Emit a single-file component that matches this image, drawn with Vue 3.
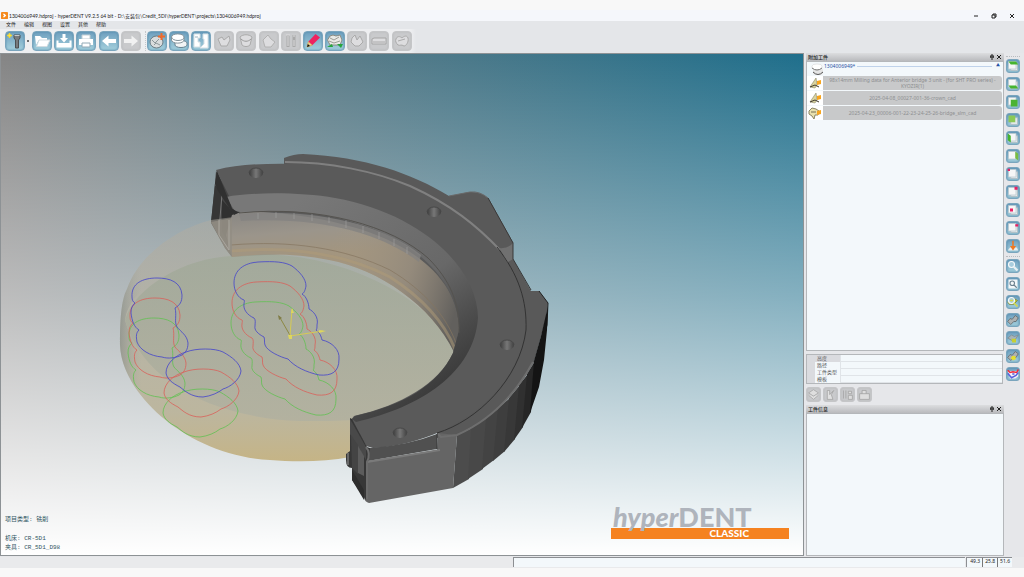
<script setup>
const menus = ['文件', '编辑', '视图', '设置', '其他', '帮助']

const W = '#ffffff'
const G = '#dddddf'
const tooth = 'M4 8C5 5 8 5 10 7C12 5 15 4 16 7C17 11 14 15 12 15C9 13 8 15 6 14C4 12 3 10 4 8Z'

const groups = [
  {
    name: 'start',
    items: [
      {
        label: '新建项目',
        drop: true,
        p: [
          { d: 'M9 4H15V7L13.500 9V17H10.500V9L9 7Z', f: '#777b7e', s: '#4c5052' },
          { d: 'M9.500 4.500H14.500', s: '#c8c8c8' },
          { d: 'M4.500 2L5.200 3.800L7 4.500L5.200 5.200L4.500 7L3.800 5.200L2 4.500L3.800 3.800Z', f: '#ffe94a', s: '#f2d633' }
        ]
      }
    ]
  },
  {
    name: 'file',
    items: [
      { label: '打开', p: [{ d: 'M3 5H8L10 7H15V9.500H6.500L4 14Z', f: W }, { d: 'M7 9H18L15 15.500H4.500Z', f: W, s: '#d3dde2' }] },
      { label: '保存', p: [{ d: 'M8.500 3H11.500V7H14L10 11.500L6 7H8.500Z', f: W }, { d: 'M3.500 9.500V15.500H16.500V9.500', s: W, w: 2 }, { d: 'M4 13.500H16', s: W, w: 3 }] },
      { label: '打印', p: [{ d: 'M6 4H14V8H6Z', f: W, s: '#c2ced4' }, { d: 'M3 8H17V14H3Z', f: W }, { d: 'M6 12H14V16H6Z', f: W, s: '#93aab6' }] }
    ]
  },
  {
    name: 'history',
    items: [
      { label: '后退', p: [{ d: 'M3 10L9.500 4.500V8H17V12H9.500V15.500Z', f: W }] },
      { label: '前进', off: true, p: [{ d: 'M17 10L10.500 4.500V8H3V12H10.500V15.500Z', f: '#f1f1f1' }] }
    ]
  },
  {
    name: 'blank',
    sep: true,
    items: [
      {
        label: '添加工件',
        p: [
          { d: 'M3 11A6.500 6 0 1 1 16 11A6.500 6 0 1 1 3 11Z', f: '#d9dcdd', s: '#6c7c84' },
          { d: 'M5 9L8 12L12 8M7 14L9 12L13 14', s: '#8d979a' },
          { d: 'M14.500 2V9M11 5.500H18', s: '#f0692a', w: 2 }
        ]
      },
      {
        label: '毛坯',
        p: [
          { d: 'M6 12A6 2.500 0 0 1 18 12V14A6 2.500 0 0 1 6 14Z', f: '#f2f4f5', s: '#688391' },
          { d: 'M2.500 6A6 3 0 0 1 15 6V9A6 3 0 0 1 2.500 9Z', f: W, s: '#84939b' },
          { d: 'M3 6.500A6 3 0 0 0 15 6.500', s: '#84939b' }
        ]
      },
      { label: '夹具', p: [{ d: 'M3 3H9V7H7V11H9V16H3ZM12 3H17V17H9L13 13V8H12Z', f: W, s: '#d6e0e5' }, { d: 'M4 6H7', s: '#9fb4bf' }] }
    ]
  },
  {
    name: 'scan',
    items: [
      { label: '定位', off: true, p: [{ d: 'M4 8L8 6L10 9L15 5L16 9L13 15H7Z', f: G, s: '#aaa' }] },
      { label: '颌弓', off: true, p: [{ d: 'M4 6C7 3 13 3 16 6L14 14C12 16 8 16 6 14Z', f: G, s: '#aaa' }, { d: 'M5 8C8 11 12 11 15 8', s: '#999' }] }
    ]
  },
  {
    name: 'edit',
    items: [
      { label: '支撑', off: true, p: [{ d: 'M4 9L9 4L12 8L16 11L12 16H6Z', f: G, s: '#b2b2b2' }] },
      { label: '刀具', off: true, p: [{ d: 'M7 4V16M13 4V16', s: '#a9a9a9', w: 3 }, { d: 'M5 4H9M7 5V15M12 5H14M13 9V15', s: G }] },
      {
        label: '标记',
        p: [
          { d: 'M4 16L5.500 10.500L9.500 14Z', f: '#f1cf84', s: '#cfae6c' },
          { d: 'M5.500 10.500L12.500 3L17 6.500L9.500 14Z', f: '#ef2360' },
          { d: 'M4 16L4.800 13L7 15Z', f: '#111' }
        ]
      },
      {
        label: '计算',
        p: [
          { d: 'M5 5L8 4L11 5L15 4L17 9L15 14H5L2.500 9Z', f: '#e9e9e5', s: '#8c8c83' },
          { d: 'M5 7L9 9L14 6M4 10L9 12L15 10', s: '#9d9d96' },
          { d: 'M2 16L7 13L8 16ZM12 13L18 13L16 17Z', f: '#25a53c' }
        ]
      },
      { label: '碰撞', off: true, p: [{ d: 'M5 7L8 4L10 9L13 5L16 11L12 15H8L4 11Z', f: G, s: '#aaa' }] },
      { label: '连接杆', off: true, p: [{ d: 'M3 8L5 7H17V13H3Z', f: G, s: '#a6a6a6' }, { d: 'M4 11H16', s: '#aaa' }] }
    ]
  },
  { name: 'simulate', items: [{ label: '模拟', off: true, p: [{ d: tooth, f: G, s: '#aaa' }, { d: 'M6 10L13 8', s: '#aaa' }] }] }
]

const cube = { d: 'M4 4H14V14H4Z', f: '#f5f6f6', s: '#bac7ce' }
const back = { d: 'M7 7H16V16H7Z', f: '#e2e8ea', s: '#adb9c0' }
const views = [
  { label: '俯视图', p: [back, cube, { d: 'M4 4H14L17 8H7Z', f: '#45b42e' }] },
  { label: '仰视图', p: [back, cube, { d: 'M4 12H14L17 16H7Z', f: '#45b42e' }] },
  { label: '前视图', p: [cube, { d: 'M7 7H16V16H7Z', f: '#4bb332' }] },
  { label: '后视图', p: [back, { d: 'M4 4H13V13H4Z', f: '#8cc956' }] },
  { label: '左视图', p: [back, cube, { d: 'M3 4L7 7V16L3 13Z', f: '#45b42e' }] },
  { label: '右视图', p: [cube, { d: 'M13 4L17 7V16L13 13Z', f: '#77bd43' }] },
  { label: '左上视角', p: [back, cube, { d: 'M3 3H6V6H3Z', f: '#e91f63' }] },
  { label: '右上视角', p: [back, cube, { d: 'M12 3H16V7H12Z', f: '#e91f63' }] },
  { label: '左前视角', p: [back, cube, { d: 'M6 8H10V12H6Z', f: '#e91f63' }] },
  { label: '右前视角', p: [back, cube, { d: 'M13 5H17V8H13Z', f: '#e91f63' }] },
  { label: '插入方向', p: [{ d: 'M3 16L6 12H15L17 16Z', f: '#e8edf0' }, { d: 'M9 3H11V10H14L10 16L6 10H9Z', f: '#f17822' }] }
]
const lens = { d: 'M4 8A4 4 0 1 1 12 8A4 4 0 1 1 4 8Z', f: '#a9cddd', s: '#f7fafb', w: 1.500 }
const handle = { d: 'M11 11L16 16', s: '#e9eff2', w: 3 }
const block = { d: 'M3 12L6 8L9 9L13 4L17 7L14 12L11 12L7 16Z', f: '#aeb1b1', s: '#5e6366' }
const tools = [
  { label: '缩放', p: [lens, handle] },
  { label: '缩放窗口', p: [{ d: 'M4 4H16V16H4Z', f: '#f4f7f8' }, { d: 'M6 9A3 3 0 1 1 12 9A3 3 0 1 1 6 9M11 11L15 15', s: '#6e8390', w: 1.500 }] },
  { label: '适合视图', p: [{ d: 'M3 10L9 4L16 8L11 13H5Z', f: '#bcc442', s: '#7c8429' }, lens, { d: 'M6 8H10M11 11L16 16', s: '#d5d945', w: 2 }] },
  { label: '显示夹具', p: [block] },
  { label: '显示毛坯', p: [{ d: 'M3 10L8 6L12 8L17 6L13 12L8 13Z', f: '#a9b3b8', s: '#7e8a90' }, { d: 'M8 11H14V16H9Z', f: '#c7cf2f' }] },
  { label: '显示工件', p: [block, { d: 'M9 10L13 10L14 14L10 16L7 13Z', f: '#e3df31' }] },
  { label: '截面', p: [{ d: 'M3 6H17V13L13 16H6Z', f: '#f6f2f6' }, { d: 'M3 5L6 8L10 7L15 8L17 4', s: '#f22a38', w: 2 }, { d: 'M3 9L8 15L14 12L17 8M9 10H12', s: '#5760dd', w: 2 }] }
]
const parts = [
  { text: '98x14mm Milling data for Anterior bridge 3 unit - (for SHT PRO series) - KYOZIR(1)', kind: 'mill' },
  { text: '2025-04-08_00027-001-36-crown_cad', kind: 'mill' },
  { text: '2025-04-23_00006-001-22-23-24-25-26-bridge_slm_cad', kind: 'bridge' }
]
const props = ['高度', '路径', '工件类型', '模板']
const partActions = [
  { label: '工件', p: [{ d: 'M4 8L10 4L16 8L10 12ZM4 11L10 16L16 11', f: '#dedede', s: '#a8a8a8' }] },
  { label: '编辑工件', p: [{ d: 'M6 5H9V10L14 5L11 10L13 16H6Z', f: '#e1e1e1', s: '#a3a3a3' }] },
  { label: '复制工件', p: [{ d: 'M5 5V15M8 5V15M11 6H15V9H11ZM11 11H16V16H11Z', f: '#ddd', s: '#a3a3a3' }] },
  { label: '锁定工件', p: [{ d: 'M4 9H16V16H4ZM7 9V5H12V9', f: '#dedede', s: '#a3a3a3' }] }
]

const outlines = [
  'M132 297C131 283 143 278 157 278C170 278 181 282 182 295C182 302 180 305 175 308C177 315 174 322 177 327C181 332 187 335 188 343C188 350 185 353 182 355C176 358 168 359 162 357C150 356 140 350 137 342C136 336 136 333 139 330C134 327 132 321 131 313C131 308 132 306 135 303C133 302 132 300 132 297Z',
  'M234 283C234 270 244 263 258 262C275 261 285 262 292 266C300 272 306 279 306 286C305 291 304 293 302 294C306 296 309 303 309 309C313 311 319 317 317 325C317 328 317 329 316 330C320 333 321 336 322 340C332 342 340 350 339 359C339 372 332 376 319 375C306 372 295 367 288 359C280 357 267 351 265 345C264 342 265 340 264 337C258 334 254 330 255 326C255 323 256 320 254 318C247 315 243 309 244 304C244 302 245 301 244 300C238 298 234 291 234 283Z',
  'M166 373C166 363 176 355 186 352C196 348 215 348 223 352C232 357 240 363 241 371C240 380 230 387 223 389C218 393 211 396 203 397C191 397 185 391 180 387C172 383 167 379 166 373Z'
]
const layers = [
  { color: '#62c052', move: 'translate(-3 40)' },
  { color: '#d9605a', move: 'translate(-2 20)' },
  { color: '#4444cc', move: 'translate(0 0)' }
]
const holes = [[256, 173], [434, 212], [507, 345], [400, 433]]
const facets = [
  ['M457 435L472 428L469 479L453 488Z', '#4c4c4c'],
  ['M471 428L487 418L483 469L468 479Z', '#484848'],
  ['M486 418L499 408L494 460L482 469Z', '#434343'],
  ['M498 408L510 398L505 451L493 461Z', '#3e3e3e'],
  ['M509 398L520 385L515 439L504 452Z', '#383838'],
  ['M519 385L528 374L523 427L514 440Z', '#303030'],
  ['M527 374L535 361L531 412L522 428Z', '#262626'],
  ['M534 361L541 336L548 306L547 330L544 360L539 387L530 413Z', '#141414']
]
</script>

<template>
  <div class="app">
    <header class="titlebar">
      <svg class="logo" viewBox="0 0 8 8" aria-hidden="true">
        <rect width="8" height="8" rx="1" fill="#f58a1f" />
        <path d="M2 2H4L6 4L4 6H2L3.500 4Z" fill="#fff" />
      </svg>
      <span class="title">1304006949.hdproj - hyperDENT V9.2.5 64 bit - D:\安装包\Credit_5DI\hyperDENT\projects\1304006949.hdproj</span>
      <div class="window">
        <button aria-label="最小化"><svg viewBox="0 0 6 6"><path d="M1 3H5" /></svg></button>
        <button aria-label="还原"><svg viewBox="0 0 6 6"><path d="M1 2H4V5H1ZM2 2V1H5V4H4" /></svg></button>
        <button aria-label="关闭"><svg viewBox="0 0 6 6"><path d="M1 1L5 5M5 1L1 5" /></svg></button>
      </div>
    </header>

    <nav class="menubar">
      <button v-for="m in menus" :key="m">{{ m }}</button>
    </nav>

    <div class="toolbar">
      <div v-for="g in groups" :key="g.name" class="group" :class="{ sep: g.sep }">
        <template v-for="b in g.items" :key="b.label">
          <button class="tool" :disabled="b.off" :aria-label="b.label">
            <svg viewBox="1 1 18 18"><path v-for="(q, i) in b.p" :key="i" :d="q.d" :fill="q.f || 'none'" :stroke="q.s || 'none'" :stroke-width="q.w || 1" /></svg>
          </button>
          <button v-if="b.drop" class="drop" aria-label="更多"></button>
        </template>
      </div>
    </div>

    <div class="body">
      <main class="viewport">
        <svg class="scene" viewBox="1 54 802 501" role="img" aria-label="毛坯与夹具">
          <defs>
            <linearGradient id="disk" x1="0" y1="0" x2="0" y2="1">
              <stop offset="0" stop-color="#b0aca2" stop-opacity=".5" />
              <stop offset=".45" stop-color="#b3ad98" stop-opacity=".72" />
              <stop offset=".8" stop-color="#b8b094" stop-opacity=".85" />
              <stop offset="1" stop-color="#c4b282" stop-opacity=".96" />
            </linearGradient>
            <linearGradient id="face" x1="0" y1="0" x2="0" y2="1">
              <stop offset="0" stop-color="#a0a898" />
              <stop offset="1" stop-color="#b0b0a0" />
            </linearGradient>
            <linearGradient id="rim" x1="0" y1="0" x2="1" y2="0">
              <stop offset="0" stop-color="#77807f" stop-opacity=".5" />
              <stop offset=".2" stop-color="#a4aaa6" stop-opacity="0" />
            </linearGradient>
            <linearGradient id="wall" gradientUnits="userSpaceOnUse" x1="230" y1="212" x2="234" y2="262">
              <stop offset="0" stop-color="#888683" />
              <stop offset=".5" stop-color="#9b958b" />
              <stop offset="1" stop-color="#a3957e" />
            </linearGradient>
            <linearGradient id="wallRight" gradientUnits="userSpaceOnUse" x1="330" y1="250" x2="462" y2="290">
              <stop offset="0" stop-color="#a59a88" stop-opacity="0" />
              <stop offset=".6" stop-color="#8e867b" stop-opacity=".7" />
              <stop offset="1" stop-color="#62605d" />
            </linearGradient>
            <linearGradient id="chamfer" gradientUnits="userSpaceOnUse" x1="300" y1="200" x2="450" y2="400">
              <stop offset="0" stop-color="#787878" />
              <stop offset=".55" stop-color="#686868" />
              <stop offset=".8" stop-color="#4a4a4a" />
              <stop offset="1" stop-color="#343434" />
            </linearGradient>
            <linearGradient id="hole" x1="0" y1="0" x2="1" y2="0">
              <stop offset="0" stop-color="#3c3c3c" />
              <stop offset=".5" stop-color="#777" />
              <stop offset="1" stop-color="#404040" />
            </linearGradient>
          </defs>

          <path d="M216 171L215 183L211 223L225 248L232 257L280 254L241 212Z" fill="#444" />
          <path d="M215 184L211 222L219 236L222 196Z" fill="#363636" />
          <path d="M222 200L222 232L232 247L233 212Z" fill="#303030" />
          <path d="M222 194L219 230M215 184L235 212" stroke="#777" stroke-width="1" fill="none" />

          <path d="M120 345C120 322 121 300 127 289C140 252 180 228 211 220L241 216C300 212 370 225 414 258L458 310L460 360L442 388L420 404L354 424L350 457C325 462 295 462 270 460C190 456 122 396 120 345Z" fill="url(#disk)" />
          <path d="M120 345C120 322 121 300 127 289C140 252 180 228 211 220L230 248C190 258 130 283 125 320C138 365 165 383 187 392L187 433C150 413 121 378 120 345Z" fill="url(#rim)" />
          <path d="M125 320C135 287 184 258 232 256C330 244 430 297 453 347L460 360C450 387 406 414 354 420C340 421 320 421 300 421C215 418 142 382 125 320Z" fill="url(#face)" fill-opacity=".78" />

          <path d="M232 215L241 212C300 208 390 228 430 264C449 283 459 300 459 330L454 352C432 306 379 269 329 260C298 254 265 253 232 257L226 235Z" fill="url(#wall)" />
          <path d="M300 212C350 216 400 236 430 264C449 283 459 300 459 330L454 352C432 306 379 269 329 260L300 256Z" fill="url(#wallRight)" />
          <path d="M231 245C290 240 345 248 390 270C425 291 446 316 456 343" fill="none" stroke="#857560" stroke-opacity=".7" />
          <path d="M231 251C290 246 345 254 390 277C424 299 444 322 455 349" fill="none" stroke="#b09b78" stroke-opacity=".5" stroke-width="3" />
          <path d="M211 222L232 218L232 257L225 248Z" fill="#928d83" fill-opacity=".8" />
          <path d="M219 220V235L229 250V220" fill="none" stroke="#aaa79f" stroke-width="1" />

          <path d="M284 163V158Q294 154 303 154C365 157 411 173 449 196L469 192Q480 191 488 198L513 243V259L531 291L539 291L548 303L546 318L534 362C515 397 490 419 457 435L437 438V430C480 415 519 375 522 330C522 300 510 273 490 248C450 206 385 175 284 165Z" fill="#595959" />
          <path d="M216 170C239 164 270 163 300 164C390 168 455 201 496 243C519 273 527 300 526 330C519 378 477 426 407 443Q385 448 373 448L366 446L351 420L354 416C402 405 438 384 453 353L459 330C459 270 392 216 241 211L237 212Z" fill="#5a5a5a" />
          <path d="M226 197C252 192 300 192 335 198C424 214 478 270 478 318C474 373 421 407 356 422L352 419L355 416C404 405 438 385 453 353L459 330C459 270 392 216 285 211L241 212Q236 213 234 210Z" fill="url(#chamfer)" />
          <path d="M239 213C320 205 392 226 428 258C450 280 460 303 459 333" fill="none" stroke="#55534f" />
          <path d="M239 214C320 208 385 226 421 255L419 262C385 236 327 216 241 221Z" fill="#838281" fill-opacity=".8" />
          <path d="M258 213V219M276 212V218M294 213V219M312 214V221M329 217V223M346 220V228M363 226V233M379 232V239M394 239V246M407 247V254" stroke="#aaa" stroke-opacity=".5" />
          <path d="M217 171L232 208Q236 212 240 212L234 215L218 191L215 184Z" fill="#303030" />
          <path d="M285 162C329 162 374 171 410 186C452 205 477 226 500 250" fill="none" stroke="#808080" stroke-width="2" />
          <path d="M497 247C519 275 527 301 526 330C520 379 477 421 437 433" fill="none" stroke="#333" stroke-width="1" />
          <path d="M499 248Q508 249 513 243V259L508 262Z" fill="#707070" />
          <path d="M449 196L470 192Q480 191 488 198L513 243" fill="none" stroke="#696969" />
          <path d="M488 198L513 243V259L531 290" fill="none" stroke="#383838" />
          <path d="M539 291L548 303L547 325L541 349" fill="none" stroke="#202020" stroke-width="1" />

          <g v-for="h in holes" :key="h[0]">
            <ellipse :cx="h[0]" :cy="h[1]" rx="7" ry="5" fill="url(#hole)" />
            <path :d="`M${h[0] - 7} ${h[1]}A7 5 0 0 1 ${h[0] + 7} ${h[1]}`" fill="none" stroke="#484848" />
          </g>

          <path v-for="f in facets" :key="f[0]" :d="f[0]" :fill="f[1]" />
          <path d="M368 461L437 450L438 433L457 435L453 488L369 503Q365 502 364 498Z" fill="#656565" />
          <path d="M371 448Q409 445 437 434V449L368 461L366 448Z" fill="#505050" />
          <path d="M367 462L440 450" stroke="#7a7a7a" stroke-width="2" />
          <path d="M438 434L441 437L457 435C489 421 515 395 533 362" fill="none" stroke="#6e6e6e" stroke-width="2" />
          <path d="M437 434V449" stroke="#373737" />
          <path d="M350 418L352 419L367 447L370 448L368 461L366 500L352 480L352 468Q346 468 346 460V454L350 451Z" fill="#373737" />
          <path d="M350 419V434L366 460V447Z" fill="#494949" />
          <path d="M351 435L358 445V474L352 468Z" fill="#444" />
          <path d="M358 446L364 456V476L358 473Z" fill="#5c5c5c" />
          <path d="M352 470L364 490V500L352 480Z" fill="#2d2d2d" />
          <path d="M348 453V465" stroke="#676767" stroke-width="2" />
          <path d="M366 447Q371 453 367 462V499" fill="none" stroke="#6c6c6c" stroke-width="2" />

          <g v-for="l in layers" :key="l.color" :transform="l.move" :stroke="l.color" fill="none" stroke-width="1" stroke-opacity=".8">
            <path v-for="o in outlines" :key="o" :d="o" />
          </g>

          <g transform="translate(1 1)">
            <path d="M290 336L278 315" stroke="#8c8843" stroke-width="1" />
            <path d="M289 335L291 308M289 335L322 330" stroke="#d6cb54" stroke-width="1" />
            <path d="M290 312L291 307L293 312ZM318 329L325 330L318 332ZM287 334H291V338H288Z" fill="#ded65e" />
            <path d="M277 314L281 317L278 319Z" fill="#807d49" />
          </g>
        </svg>

        <div class="info">
          <p>项目类型: 铣削</p>
          <p class="gap">机床: CR-5D1</p>
          <p>夹具: CR_5D1_D98</p>
        </div>
        <div class="brand">
          <div class="word"><i>hyper</i>DENT</div>
          <div class="edition">CLASSIC</div>
        </div>
      </main>

      <aside class="side">
        <section class="panel parts">
          <h2>附加工件
            <span class="pins"><svg viewBox="0 0 6 6"><path d="M2 1H4V3H5H1H2ZM3 3V6" /></svg><svg viewBox="0 0 6 6"><path d="M1 1L5 5M5 1L1 5" /></svg></span>
          </h2>
          <div class="box tree">
            <div class="root">
              <svg class="thumb" viewBox="0 0 16 14">
                <path d="M6 8A5 2 0 0 1 16 8V11A5 2 0 0 1 6 11Z" fill="#e5e5e5" />
                <path d="M6 10Q11 15 16 10" fill="none" stroke="#555" />
                <path d="M5 4A5 2 0 0 1 15 4V6A5 2 0 0 1 5 6Z" fill="#fff" stroke="#ccc" stroke-width=".5" />
                <path d="M5 6Q10 10 15 6" fill="none" stroke="#777" />
              </svg>
              <span>1304006949*</span><hr /><button class="fold" aria-label="收起">▲</button>
            </div>
            <div v-for="p in parts" :key="p.text" class="part">
              <svg class="thumb white" viewBox="0 0 16 14">
                <template v-if="p.kind === 'mill'">
                  <path d="M3 11L9 2L10 9L8 12Z" fill="#dad49e" stroke="#77745a" stroke-width=".5" />
                  <path d="M3 11L8 9L12 11" fill="none" stroke="#3f3a30" />
                </template>
                <template v-else>
                  <path d="M2 5L5 2L9 3L12 5L11 9L8 9L7 13L5 10L2 8Z" fill="#e8e0ae" stroke="#8b8566" />
                  <path d="M4 6H9" stroke="#777152" />
                </template>
                <path d="M10 5L14 4V8L10 9Z" fill="#f7a51e" />
              </svg>
              <button class="pill">{{ p.text }}</button>
            </div>
          </div>
        </section>
        <table class="props">
          <tbody>
            <tr v-for="(p, i) in props" :key="p" :class="{ on: i === 0 }"><th scope="row">{{ p }}</th><td></td></tr>
          </tbody>
        </table>
        <div class="actions">
          <button v-for="a in partActions" :key="a.label" class="tool" disabled :aria-label="a.label">
            <svg viewBox="2 2 16 16"><path v-for="(q, i) in a.p" :key="i" :d="q.d" :fill="q.f" :stroke="q.s" /></svg>
          </button>
        </div>
        <section class="panel detail">
          <h2>工件信息
            <span class="pins"><svg viewBox="0 0 6 6"><path d="M2 1H4V3H5H1H2ZM3 3V6" /></svg><svg viewBox="0 0 6 6"><path d="M1 1L5 5M5 1L1 5" /></svg></span>
          </h2>
          <div class="box"></div>
        </section>
      </aside>

      <div class="rail">
        <div class="stack">
          <button v-for="b in views" :key="b.label" class="tool" :aria-label="b.label">
            <svg viewBox="2 2 16 16"><path v-for="(q, i) in b.p" :key="i" :d="q.d" :fill="q.f || 'none'" :stroke="q.s || 'none'" :stroke-width="q.w || 1" /></svg>
          </button>
        </div>
        <div class="stack">
          <button v-for="b in tools" :key="b.label" class="tool" :aria-label="b.label">
            <svg viewBox="2 2 16 16"><path v-for="(q, i) in b.p" :key="i" :d="q.d" :fill="q.f || 'none'" :stroke="q.s || 'none'" :stroke-width="q.w || 1" /></svg>
          </button>
        </div>
      </div>
    </div>

    <footer class="status">
      <div class="progress"></div>
      <div class="coords"><span>49.3</span><span>25.8</span><span>51.6</span></div>
    </footer>
  </div>
</template>

<style>
body {
  margin: 0;
  background: #f8f8f8;
}
</style>

<style scoped>
.app {
  box-sizing: border-box;
  display: flex;
  flex-direction: column;
  min-height: 100vh;
  padding: 10px 0 11px;
  background: #f8f8f8;
  color: #222;
  font: 5px/8px "Noto Sans", "Noto Sans CJK SC", sans-serif;
}
button {
  padding: 0;
  border: 0;
  background: none;
  color: inherit;
  font: inherit;
}
svg {
  display: block;
}
.titlebar {
  display: flex;
  align-items: center;
  height: 11px;
  padding: 0 9px 0 1px;
  background: #f5f7fb;
}
.logo {
  width: 7px;
  height: 7px;
  margin-right: 1px;
}
.title {
  font-family: Lato, "Noto Sans CJK SC", sans-serif;
  white-space: nowrap;
}
.window {
  display: flex;
  gap: 12px;
  margin-left: auto;
}
.window svg,
.pins svg {
  width: 6px;
  height: 6px;
  fill: none;
  stroke: #222;
  stroke-width: 1;
}
.menubar {
  display: flex;
  gap: 8px;
  height: 8px;
  padding-left: 6px;
  background: #e4e6e9;
}
.menubar button {
  margin-top: -2px;
}
.toolbar {
  display: flex;
  align-items: center;
  gap: 3px;
  height: 24px;
  padding-left: 5px;
  background: linear-gradient(90deg, #eeeff1 0 410px, #e4e6e9 416px);
}
.group {
  display: flex;
  align-items: center;
  gap: 2px;
}
.group.sep {
  margin-left: 1px;
  padding-left: 1px;
  border-left: 1px dotted #c6c8cb;
}
.tool {
  width: 20px;
  height: 20px;
  box-sizing: border-box;
  border: 1px solid #7aa5bd;
  border-radius: 4px;
  background: linear-gradient(#6e9fbe, #a3cfdc);
  box-shadow: inset 0 0 2px #4e86a8;
}
.tool svg {
  width: 100%;
  height: 100%;
}
.tool:disabled {
  border-color: #c5c6c8;
  background: #c9cacc;
  box-shadow: inset 0 0 2px #b4b5b7;
}
.drop {
  width: 2px;
  height: 2px;
  background: #444;
  border-radius: 1px;
}
.body {
  display: flex;
  flex: 1;
  padding-bottom: 1px;
  background: #e6e7ea;
}
.viewport {
  position: relative;
  flex: 1;
  min-width: 0;
  border: 1px solid #8d9295;
  background: linear-gradient(rgba(255, 255, 255, 0), rgba(255, 255, 255, .45) 48%, #fff), linear-gradient(90deg, #858585, #1f6f8c);
}
.scene {
  width: 100%;
  height: 100%;
}
.info {
  position: absolute;
  left: 4px;
  bottom: 3px;
  color: #2f5562;
  font: 6px/9px "Liberation Mono", "Noto Sans CJK SC", monospace;
}
.info p {
  margin: 0;
}
.info .gap {
  margin-top: 10px;
}
.brand {
  position: absolute;
  right: 14px;
  bottom: 16px;
  width: 178px;
  font-family: Lato, "Liberation Sans", sans-serif;
  font-weight: 900;
}
.word {
  position: relative;
  z-index: 1;
  padding-left: 2px;
  color: #afb4bc;
  font-size: 27px;
  line-height: 22px;
}
.edition {
  padding-right: 40px;
  background: #f58220;
  color: #fff;
  font-size: 10px;
  line-height: 11px;
  text-align: right;
}
.side {
  display: flex;
  flex-direction: column;
  width: 198px;
  padding: 0 0 0 2px;
}
.panel {
  display: flex;
  flex-direction: column;
}
.parts {
  flex: 296 1 0;
}
.detail {
  flex: 150 1 0;
  margin-top: 3px;
}
h2 {
  display: flex;
  align-items: center;
  justify-content: space-between;
  height: 8px;
  margin: 0;
  padding: 0 2px;
  background: linear-gradient(#dcdddf, #b9babd);
  font-size: 5px;
  font-weight: 500;
}
.pins {
  display: flex;
  gap: 1px;
}
.box {
  flex: 1;
  border: 1px solid #b4b7ba;
  background: #f3f8fb;
}
.root {
  display: flex;
  align-items: center;
  height: 14px;
  color: #2850a4;
}
.thumb {
  flex: none;
  width: 16px;
  height: 14px;
}
.white {
  background: #fff;
}
.root span {
  margin: -6px 2px 0 1px;
}
hr {
  flex: 1;
  margin: 0 4px 6px 0;
  border: 0;
  border-top: 1px solid #bfd2ea;
}
.fold {
  margin: -6px 3px 0 0;
  font-size: 4px;
}
.part {
  display: flex;
  margin-bottom: 1px;
  padding-right: 1px;
}
.pill {
  flex: 1;
  padding: 0 4px;
  border-radius: 0 3px 3px 0;
  background: #c8c9ca;
  color: #8d8f91;
  line-height: 6px;
  text-align: center;
}
.props {
  margin: 3px 1px 0 0;
  border: 1px solid #b4b7ba;
  border-spacing: 0;
  background: #f3f8fb;
}
.props th {
  box-sizing: border-box;
  width: 34px;
  height: 7px;
  padding: 0 0 0 2px;
  border-left: 8px solid #dadbdf;
  border-right: 1px solid #e0e4e8;
  color: #555;
  font-weight: 400;
  line-height: 7px;
  text-align: left;
  white-space: nowrap;
}
.props td {
  padding: 0;
  border-bottom: 1px solid #e0e4e8;
}
.on th {
  background: #dadbdf;
}
.actions {
  display: flex;
  gap: 2px;
  margin-top: 3px;
}
.actions .tool {
  width: 15px;
  height: 15px;
  border-radius: 3px;
}
.rail {
  display: flex;
  flex-direction: column;
  width: 14px;
  padding: 3px 4px 0 2px;
}
.stack {
  display: flex;
  flex-direction: column;
  gap: 4px;
  padding-top: 2px;
  border-top: 1px dotted #b9bcc0;
}
.stack + .stack {
  margin-top: 3px;
}
.rail .tool {
  width: 14px;
  height: 14px;
  border-radius: 3px;
}
.status {
  display: flex;
  justify-content: flex-end;
  height: 10px;
  padding: 0 12px 1px 0;
  background: #e9eaec;
}
.progress {
  width: 451px;
  border: 1px solid #8c8f93;
  border-width: 1px 0 0 1px;
  background: #f3f8fb;
}
.coords {
  display: flex;
  margin-left: 1px;
  padding-left: 1px;
  border: 1px solid #8c8f93;
  border-width: 1px 0 0 1px;
  background: #f3f8fb;
}
.coords span {
  padding: 0 2px;
  line-height: 7px;
}
.coords span + span {
  border-left: 1px solid #777;
}
</style>
